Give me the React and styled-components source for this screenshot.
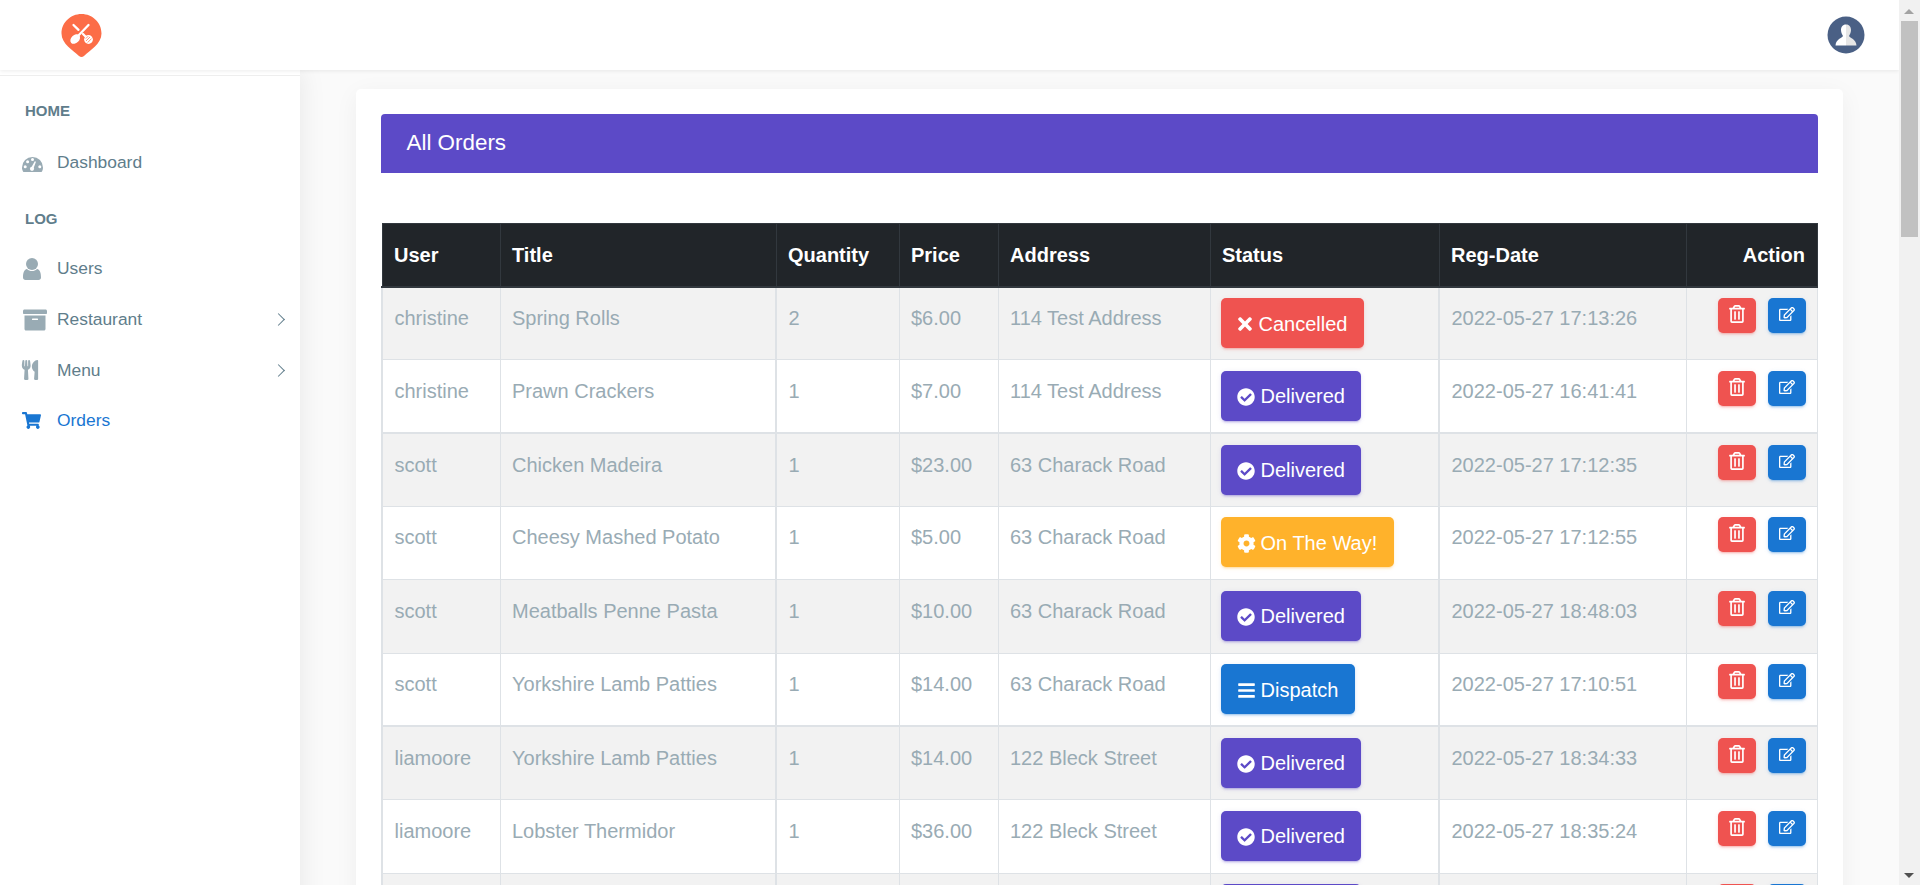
import React from "react";
import styled, { createGlobalStyle } from "styled-components";
import { FaArchive, FaUtensils, FaShoppingCart, FaTimes, FaCheckCircle, FaCog, FaBars, FaRegTrashAlt, FaRegEdit } from "react-icons/fa";

const Global = createGlobalStyle`
  html { scrollbar-width: none; }
  html::-webkit-scrollbar { display: none; }
  body { margin: 0; padding-right: 21px; background: #fafafa; font-family: "Liberation Sans", Arial, sans-serif; color: #99abb4; }
  * { box-sizing: border-box; }
`;

const Topbar = styled.header`
  height: 70px; background: #fff; display: flex; align-items: center; justify-content: space-between;
  padding: 0 34px 0 60px; box-shadow: 0 1px 4px rgba(0,0,0,.08); position: relative; z-index: 2;
`;
const Shell = styled.div`display: flex; align-items: stretch;`;
const Sidebar = styled.aside`
  width: 300px; flex: none; background: #fff; padding-top: 5px; box-shadow: 1px 0 25px rgba(0,0,0,.08);
  position: relative; z-index: 1;
`;
const SideInner = styled.nav`border-top: 1px solid #eeeeee; padding-top: 25px;`;
const SectionLabel = styled.div`
  font-size: 15px; font-weight: 700; color: #607d8b; padding-left: 25px; line-height: 20px;
  margin: ${p => p.$first ? "0 0 16px" : "21px 0 14px"};
`;
const NavItem = styled.a`
  display: flex; align-items: center; height: ${p => p.$short ? 50 : 51}px; padding: 0 13px 0 22px; font-size: 17.4px;
  color: ${p => p.$active ? "#1976d2" : "#607d8b"};
  svg { color: ${p => p.$active ? "#1976d2" : "#99abb4"}; }
`;
const NavIcon = styled.span`
  width: 35px; flex: none; display: flex; align-items: center;
  svg { margin-left: ${p => p.$shift || 0}px; }
`;
const NavText = styled.span`flex: 1;`;
const Chevron = styled.i`
  width: 9px; height: 9px; border-top: 1px solid #607d8b; border-right: 1px solid #607d8b;
  transform: rotate(45deg); margin-right: 4px;
`;
const Main = styled.main`flex: 1; min-width: 0; padding: 19px 56px 40px;`;
const Card = styled.section`
  background: #fff; border-radius: 5px; padding: 25px; box-shadow: 0 5px 25px rgba(0,0,0,.05);
`;
const CardHead = styled.h1`
  margin: 0 0 50px; height: 59px; line-height: 58px; padding-left: 25.5px; background: #5c4ac7; color: #fff;
  font-size: 22.4px; font-weight: 400; border-radius: 4px 4px 0 0;
`;
const Table = styled.table`
  width: 1435px; table-layout: fixed; border-collapse: collapse; font-size: 20px;
`;
const HeadCell = styled.th`
  height: 63px; background: #212529; color: #fff; font-size: 20px; font-weight: 700;
  text-align: ${p => p.$right ? "right" : "left"}; padding: 2px 11.5px 0; border: 1px solid #32383e;
  border-bottom-width: 2px;
`;
const Row = styled.tr`
  height: 73.33px; background: ${p => p.$odd ? "#f2f2f2" : "#fff"};
  border-bottom: ${p => p.$thick ? 2 : 1}px solid #dee2e6;
`;
const Cell = styled.td`
  vertical-align: top; padding: 15.5px 12.5px 10px 11.5px; line-height: 30px;
  border-left: ${p => p.$thick ? 2 : 1}px solid #dee2e6; border-right: 1px solid #dee2e6;
  overflow: hidden; white-space: nowrap;
`;
const StatusCell = styled(Cell)`padding: 10.5px 10px 11px;`;
const ActionCell = styled(Cell)`padding: 10.5px 11px 11px; text-align: right; font-size: 0;`;
const colors = { red: "239,83,80", purple: "92,74,199", yellow: "255,178,43", blue: "25,118,210" };
const shadow = c => `0 2px 2px 0 rgba(${colors[c]},.14), 0 3px 1px -2px rgba(${colors[c]},.2), 0 1px 5px 0 rgba(${colors[c]},.12)`;
const StatusBtn = styled.button`
  height: 50px; padding: 2px 16.5px 0; border: 0; border-radius: 5px; color: #fff; font: 400 20px "Liberation Sans", Arial, sans-serif;
  background: rgb(${p => colors[p.$c]}); box-shadow: ${p => shadow(p.$c)};
  display: inline-flex; align-items: center; gap: 5.5px;
`;
const StatusGlyph = styled.span`
  width: ${p => p.$w}px; flex: none; display: flex; justify-content: center;
  svg { flex: none; }
`;
const IconBtn = styled.button`
  width: 38px; height: 35px; border: 0; border-radius: 5px; color: #fff; padding: 0 0 3px; vertical-align: top;
  background: rgb(${p => colors[p.$c]}); box-shadow: ${p => shadow(p.$c)};
  display: inline-flex; align-items: center; justify-content: center; margin-left: 12px;
`;
const Track = styled.div`
  position: fixed; top: 0; right: 0; bottom: 0; width: 21px; background: #f1f1f1; z-index: 5;
`;
const Thumb = styled.div`position: absolute; top: 21px; left: 2px; width: 17px; height: 216px; background: #c1c1c1;`;
const Arrow = styled.div`
  position: absolute; left: 5px; width: 0; height: 0; border-left: 5px solid transparent; border-right: 5px solid transparent;
  ${p => p.$down ? "bottom: 7px; border-top: 5px solid #505050;" : "top: 9px; border-bottom: 5px solid #a3a3a3;"}
`;

const Logo = () => (
  <svg width="44" height="46" viewBox="0 0 44 46" style={{ marginTop: 1 }}>
    <path d="M21.5 1C32.5 1 41.5 9.5 41.5 20.5C41.5 31 30 37 24 43Q21.5 45 19 43C13 37 1.5 31 1.5 20.5C1.5 9.5 10.5 1 21.5 1Z" fill="#fc6d47" />
    <g stroke="#fff" strokeLinecap="round" fill="none" strokeWidth="2.3">
      <path d="M28.5 12L17 24" />
      <path d="M13.5 12L18.5 16.8" />
      <path d="M23 21L26 24" />
    </g>
    <ellipse cx="15.2" cy="26" rx="5.6" ry="4" transform="rotate(-45 15.2 26)" fill="#fff" />
    <circle cx="28.5" cy="26.5" r="4.4" fill="#fff" />
    <path d="M26 28L30 24M27.7 29.5L31.5 25.6M25.8 25.6L28.2 23.2" stroke="#fc6d47" strokeWidth=".7" />
  </svg>
);
const Avatar = () => (
  <svg width="38" height="38" viewBox="0 0 38 38">
    <circle cx="19" cy="19" r="18.5" fill="#4a6085" />
    <path d="M19 8.5C15.5 8.5 14 11 14 14C14 17 15.5 19 16 20C15 22 9 23 8.5 29.5H19Z" fill="#fff" />
    <path d="M19 8.5C22.5 8.5 24 11 24 14C24 17 22.5 19 22 20C23 22 29 23 29.5 29.5H19Z" fill="#e6e6e6" />
  </svg>
);
const GaugeIcon = () => (
  <svg width="21" height="16" viewBox="0 0 21 16" style={{ marginTop: 2 }}>
    <path d="M0 11.5A10.5 10.5 0 0 1 21 11.5C21 13 20.6 14.8 19.6 16H1.4C.4 14.8 0 13 0 11.5Z" fill="currentColor" />
    <g fill="#fff">
      <circle cx="3.2" cy="10.8" r="1.5" /><circle cx="5.6" cy="5.8" r="1.5" /><circle cx="10.5" cy="3.6" r="1.5" /><circle cx="17.8" cy="10.8" r="1.5" />
      <circle cx="10" cy="12.8" r="2.1" /><path d="M9 12L12.8 5.2L14 5.8L11.2 13Z" />
    </g>
  </svg>
);
const UserIcon = () => (
  <svg width="18" height="22" viewBox="0 0 18 22" fill="currentColor">
    <circle cx="9" cy="6" r="6" />
    <path d="M2.5 22C1 22 0 21 0 19.5C0 15 1 11.5 4 11C5.5 12.5 7 13 9 13C11 13 12.5 12.5 14 11C17 11.5 18 15 18 19.5C18 21 17 22 15.5 22Z" />
  </svg>
);

const statuses = {
  cancelled: { c: "red", w: 16, icon: <FaTimes size={20} />, label: "Cancelled" },
  delivered: { c: "purple", w: 18, icon: <FaCheckCircle size={18} />, label: "Delivered" },
  way: { c: "yellow", w: 18, icon: <FaCog size={19} />, label: "On The Way!" },
  dispatch: { c: "blue", w: 18, icon: <FaBars size={19} />, label: "Dispatch" },
};

const rows = [
  ["christine", "Spring Rolls", "2", "$6.00", "114 Test Address", "cancelled", "2022-05-27 17:13:26"],
  ["christine", "Prawn Crackers", "1", "$7.00", "114 Test Address", "delivered", "2022-05-27 16:41:41"],
  ["scott", "Chicken Madeira", "1", "$23.00", "63 Charack Road", "delivered", "2022-05-27 17:12:35"],
  ["scott", "Cheesy Mashed Potato", "1", "$5.00", "63 Charack Road", "way", "2022-05-27 17:12:55"],
  ["scott", "Meatballs Penne Pasta", "1", "$10.00", "63 Charack Road", "delivered", "2022-05-27 18:48:03"],
  ["scott", "Yorkshire Lamb Patties", "1", "$14.00", "63 Charack Road", "dispatch", "2022-05-27 17:10:51"],
  ["liamoore", "Yorkshire Lamb Patties", "1", "$14.00", "122 Bleck Street", "delivered", "2022-05-27 18:34:33"],
  ["liamoore", "Lobster Thermidor", "1", "$36.00", "122 Bleck Street", "delivered", "2022-05-27 18:35:24"],
  ["liamoore", "Lobster Thermidor", "1", "$36.00", "122 Bleck Street", "delivered", "2022-05-27 18:35:24"],
];
const widths = [118, 276, 123, 99, 212, 229, 247, 131];
const heads = ["User", "Title", "Quantity", "Price", "Address", "Status", "Reg-Date", "Action"];

export default function App() {
  return (
    <>
      <Global />
      <Topbar><Logo /><Avatar /></Topbar>
      <Shell>
        <Sidebar>
          <SideInner>
            <SectionLabel $first>HOME</SectionLabel>
            <NavItem><NavIcon><GaugeIcon /></NavIcon><NavText>Dashboard</NavText></NavItem>
            <SectionLabel>LOG</SectionLabel>
            <NavItem><NavIcon $shift={1}><UserIcon /></NavIcon><NavText>Users</NavText></NavItem>
            <NavItem><NavIcon $shift={1}><FaArchive size={24} /></NavIcon><NavText>Restaurant</NavText><Chevron /></NavItem>
            <NavItem $short><NavIcon $shift={-2}><FaUtensils size={20} /></NavIcon><NavText>Menu</NavText><Chevron /></NavItem>
            <NavItem $active $short><NavIcon><FaShoppingCart size={19} /></NavIcon><NavText>Orders</NavText></NavItem>
          </SideInner>
        </Sidebar>
        <Main>
          <Card>
            <CardHead>All Orders</CardHead>
            <Table>
              <colgroup>{widths.map((w, i) => <col key={i} style={{ width: w }} />)}</colgroup>
              <thead>
                <tr>{heads.map((h, i) => <HeadCell key={h} $right={i === 7}>{h}</HeadCell>)}</tr>
              </thead>
              <tbody>
                {rows.map((r, i) => {
                  const s = statuses[r[5]];
                  return (
                    <Row key={i} $odd={i % 2 === 0} $thick={i === 1 || i === 5}>
                      <Cell $thick>{r[0]}</Cell>
                      <Cell>{r[1]}</Cell>
                      <Cell $thick>{r[2]}</Cell>
                      <Cell>{r[3]}</Cell>
                      <Cell>{r[4]}</Cell>
                      <StatusCell><StatusBtn $c={s.c}><StatusGlyph $w={s.w}>{s.icon}</StatusGlyph>{s.label}</StatusBtn></StatusCell>
                      <Cell $thick>{r[6]}</Cell>
                      <ActionCell>
                        <IconBtn $c="red"><FaRegTrashAlt size={18} /></IconBtn>
                        <IconBtn $c="blue"><FaRegEdit size={16} /></IconBtn>
                      </ActionCell>
                    </Row>
                  );
                })}
              </tbody>
            </Table>
          </Card>
        </Main>
      </Shell>
      <Track><Arrow /><Thumb /><Arrow $down /></Track>
    </>
  );
}
